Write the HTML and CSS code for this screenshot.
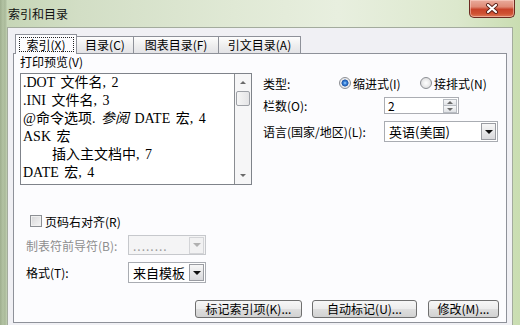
FILE: index.html
```html
<!DOCTYPE html>
<html lang="zh-CN">
<head>
<meta charset="utf-8">
<title>索引和目录</title>
<link rel="stylesheet" href="styles.css">
</head>
<body>
<div class="window">
  <div class="titlebar">
    <div class="title">索引和目录</div>
    <div class="close-btn">
      <svg width="14" height="11" viewBox="0 0 14 11">
        <path d="M3 2 L11 9 M11 2 L3 9" stroke="#5a2118" stroke-width="4" stroke-linecap="round"/>
        <path d="M3 2 L11 9 M11 2 L3 9" stroke="#ffffff" stroke-width="2.2" stroke-linecap="round"/>
      </svg>
    </div>
  </div>
  <div class="client">
    <div class="tabs">
      <div class="tab tab-active w-index"><span class="focus">索引(X)</span></div>
      <div class="tab w-toc">目录(C)</div>
      <div class="tab w-fig">图表目录(F)</div>
      <div class="tab w-cite">引文目录(A)</div>
    </div>
    <div class="panel">
      <div class="top">
        <div class="preview">
          <div class="caption">打印预览(V)</div>
          <div class="listbox">
            <div class="list">
              <div>.DOT 文件名, 2</div>
              <div>.INI 文件名, 3</div>
              <div>@命令选项. <i>参阅</i> DATE 宏, 4</div>
              <div>ASK 宏</div>
              <div class="sub">插入主文档中, 7</div>
              <div>DATE 宏, 4</div>
            </div>
            <div class="vscroll">
              <div class="sb-btn"><span class="tri-up"></span></div>
              <div class="thumb"></div>
              <div class="track"></div>
              <div class="sb-btn"><span class="tri-down"></span></div>
            </div>
          </div>
        </div>
        <div class="options">
          <div class="row-type">
            <span class="type-label">类型:</span>
            <span class="radio-opt"><span class="radio checked"></span><span>缩进式(I)</span></span>
            <span class="radio-opt"><span class="radio"></span><span>接排式(N)</span></span>
          </div>
          <div class="row-cols">
            <span class="opt-label">栏数(O):</span>
            <div class="spin">
              <span class="spin-value">2</span>
              <div class="spin-btns">
                <span class="spin-half"><span class="tri-up"></span></span>
                <span class="spin-half"><span class="tri-down"></span></span>
              </div>
            </div>
          </div>
          <div class="row-lang">
            <span class="opt-label">语言(国家/地区)(L):</span>
            <div class="combo combo-lang">
              <span class="combo-value">英语(美国)</span>
              <span class="drop"><span class="tri-down dark"></span></span>
            </div>
          </div>
        </div>
      </div>
      <div class="lower">
        <div class="check-row">
          <span class="checkbox"></span>
          <span class="check-text">页码右对齐(R)</span>
        </div>
        <div class="field-row field-leader">
          <span class="field-label disabled">制表符前导符(B):</span>
          <div class="combo combo-small combo-disabled">
            <span class="combo-value dots">........</span>
            <span class="drop drop-disabled"><span class="tri-down"></span></span>
          </div>
        </div>
        <div class="field-row field-format">
          <span class="field-label">格式(T):</span>
          <div class="combo combo-small combo-format">
            <span class="combo-value">来自模板</span>
            <span class="drop"><span class="tri-down dark"></span></span>
          </div>
        </div>
      </div>
      <div class="buttons">
        <div class="btn btn-mark">标记索引项(K)...</div>
        <div class="btn btn-auto">自动标记(U)...</div>
        <div class="btn btn-modify">修改(M)...</div>
      </div>
    </div>
  </div>
</div>
</body>
</html>
```

FILE: styles.css
```css
* { box-sizing: border-box; }

html, body {
  margin: 0;
  padding: 0;
}

body {
  width: 520px;
  height: 325px;
  overflow: hidden;
  font-family: "Noto Sans CJK SC", "Liberation Sans", sans-serif;
  font-size: 12px;
  color: #000;
  background: #d6e2c8;
}

.window {
  width: 520px;
  height: 325px;
  display: flex;
  flex-direction: column;
  background:
    linear-gradient(90deg, #9eae8e 0, #b3c3a3 3px, #a9b999 5px, #c2d1b3 7px, transparent 7px),
    linear-gradient(90deg, #c5d5b5 0%, #d2dec5 15%, #e0e9d5 45%, #e8efdf 65%, #dce8cd 88%, #c9ddb1 100%);
}

.titlebar {
  height: 27px;
  display: flex;
  justify-content: space-between;
  align-items: flex-start;
}

.title {
  padding-left: 8px;
  margin-top: 6px;
  line-height: 15px;
  font-size: 12px;
  color: #111;
}

.close-btn {
  width: 46px;
  height: 18px;
  margin-right: 5px;
  border: 1px solid #6b2a20;
  border-top: none;
  border-radius: 0 0 5px 5px;
  background: linear-gradient(#e9ab9c 0%, #df8a76 40%, #c8432a 55%, #cf5233 80%, #dd7a58 100%);
  display: flex;
  align-items: center;
  justify-content: center;
  box-shadow: inset 0 0 0 1px rgba(255, 220, 210, 0.5);
}

.client {
  flex: 1;
  margin: 0 7px;
  background: #f0f0f4;
  border: 1px solid #a3ab9d;
  border-bottom: none;
  padding: 6px 5px 0 5px;
}

/* tabs */
.tabs {
  height: 19px;
  display: flex;
  align-items: flex-end;
  padding-left: 2px;
}

.tab {
  height: 17px;
  border: 1px solid #8e9199;
  border-left: none;
  border-bottom: none;
  background: linear-gradient(#fdfdfd, #efefef 50%, #e3e3e6);
  text-align: center;
  line-height: 16px;
  white-space: nowrap;
}

.tab-active {
  height: 20px;
  margin-bottom: -1px;
  border-left: 1px solid #8e9199;
  background: #fcfcfe;
  position: relative;
  z-index: 1;
  display: flex;
  align-items: center;
  justify-content: center;
  padding-bottom: 1px;
}

.focus {
  display: inline-block;
  height: 15px;
  line-height: 13px;
  padding: 0 7px;
  border: 1px dotted #222;
}

.w-index { width: 62px; }
.w-toc { width: 57px; }
.w-fig { width: 85px; }
.w-cite { width: 82px; }

/* panel */
.panel {
  height: 270px;
  border: 1px solid #8e9199;
  background: #fcfcfe;
  padding-top: 1px;
  display: flex;
  flex-direction: column;
}

.top {
  display: flex;
}

.preview {
  margin-left: 6px;
  width: 237px;
}

.caption {
  height: 14px;
  line-height: 14px;
}

.listbox {
  margin-top: 4px;
  height: 112px;
  border: 1px solid #7f838a;
  background: #fff;
  display: flex;
}

.list {
  flex: 1;
  overflow: hidden;
  white-space: nowrap;
  padding-left: 2px;
  font-family: "Liberation Serif", "Noto Sans CJK SC", serif;
  font-size: 14px;
  line-height: 18px;
  word-spacing: 2px;
}

.list i {
  font-style: italic;
}

.list .sub {
  padding-left: 29px;
}

.vscroll {
  width: 17px;
  border-left: 1px solid #8a8d92;
  background: #f6f6f7;
  display: flex;
  flex-direction: column;
}

.sb-btn {
  height: 17px;
  display: flex;
  align-items: center;
  justify-content: center;
}

.thumb {
  height: 15px;
  margin: 0 1px;
  border: 1px solid #9da0a6;
  border-radius: 2px;
  background: linear-gradient(90deg, #f6f6f6, #e4e4e6);
}

.track {
  flex: 1;
}

.tri-up,
.tri-down {
  display: block;
  width: 0;
  height: 0;
  border-left: 3px solid transparent;
  border-right: 3px solid transparent;
}

.tri-up { border-bottom: 3px solid #6a6a6a; }
.tri-down { border-top: 3px solid #6a6a6a; }
.tri-down.dark {
  border-left-width: 4px;
  border-right-width: 4px;
  border-top: 4px solid #111;
}

/* options */
.options {
  flex: 1;
  margin-left: 11px;
  padding-top: 20px;
  padding-right: 5px;
}

.row-type {
  height: 16px;
  display: flex;
  align-items: center;
}

.type-label {
  width: 76px;
}

.radio-opt {
  width: 81px;
  display: flex;
  align-items: center;
  gap: 2px;
  white-space: nowrap;
}

.radio {
  width: 12px;
  height: 12px;
  border-radius: 50%;
  border: 1px solid #8c8f94;
  background: radial-gradient(circle, #ffffff 0, #eeeeee 3px, #d8d8da 6px);
}

.radio.checked {
  background: radial-gradient(circle, #a8d8ff 0, #3a82d8 1.6px, #1d55a8 3.2px, #e6e7ea 3.8px, #f4f4f4 6px);
}

.row-cols {
  margin-top: 6px;
  height: 17px;
  display: flex;
  align-items: center;
}

.opt-label {
  width: 121px;
  white-space: nowrap;
}

.spin {
  width: 75px;
  height: 17px;
  border: 1px solid #abadb3;
  background: #fff;
  display: flex;
}

.spin-value {
  flex: 1;
  padding-left: 3px;
  line-height: 15px;
}

.spin-btns {
  width: 14px;
  margin: 1px 1px 0 0;
  display: flex;
  flex-direction: column;
}

.spin-half {
  height: 7px;
  border: 1px solid #b8bcc2;
  background: linear-gradient(#f6f7f8, #e0e2e6);
  display: flex;
  align-items: center;
  justify-content: center;
}

.spin-half + .spin-half {
  border-top: none;
}

.row-lang {
  margin-top: 7px;
  height: 21px;
  display: flex;
  align-items: center;
}

.combo {
  border: 1px solid #a9acb2;
  background: #fff;
  display: flex;
  align-items: center;
}

.combo-lang {
  width: 114px;
  height: 21px;
}

.combo-value {
  flex: 1;
  padding-left: 4px;
  white-space: nowrap;
  font-size: 13px;
}

.drop {
  width: 15px;
  height: 17px;
  margin-right: 1px;
  border: 1px solid #9a9ca2;
  background: linear-gradient(#f7f7f7, #d9d9dc);
  display: flex;
  align-items: center;
  justify-content: center;
}

/* lower */
.lower {
  padding-left: 12px;
  margin-top: 29px;
}

.check-row {
  height: 14px;
  padding-left: 4px;
  display: flex;
  align-items: center;
}

.checkbox {
  width: 12px;
  height: 12px;
  border: 1px solid #8c8f94;
  background: linear-gradient(135deg, #d6d6d8, #f6f6f6);
  box-shadow: inset 0 0 0 1px #f0f0f0;
}

.check-text {
  margin-left: 3px;
}

.field-row {
  display: flex;
  align-items: center;
}

.field-leader {
  margin-top: 7px;
  height: 20px;
}

.field-format {
  margin-top: 7px;
  height: 21px;
}

.field-label {
  width: 102px;
  white-space: nowrap;
}

.disabled {
  color: #8e8e8e;
}

.combo-small {
  width: 78px;
  height: 100%;
}

.combo-disabled {
  background: #f4f4f5;
  border-color: #c6c8cc;
}

.dots {
  color: #9a9a9a;
  letter-spacing: 1px;
  font-size: 12px;
}

.drop-disabled {
  background: #f1f1f2;
  border-color: #d3d4d7;
}

.drop-disabled .tri-down {
  border-left-width: 4px;
  border-right-width: 4px;
  border-top: 4px solid #b0b0b0;
}

/* buttons */
.buttons {
  margin-top: 17px;
  padding-right: 7px;
  display: flex;
  justify-content: flex-end;
  gap: 10px;
}

.btn {
  height: 18px;
  border: 1px solid #6f6f6f;
  border-radius: 3px;
  background: linear-gradient(#f7f7f7, #ececec 48%, #dedede 52%, #d2d2d2);
  text-align: center;
  line-height: 16px;
  white-space: nowrap;
}

.btn-mark { width: 107px; }
.btn-auto { width: 105px; margin-right: 1px; }
.btn-modify { width: 71px; }
```
